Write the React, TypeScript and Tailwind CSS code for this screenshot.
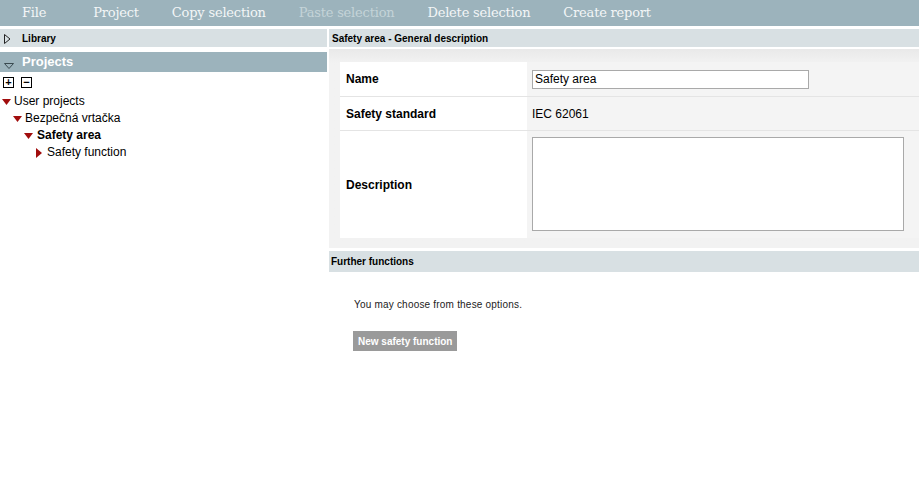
import { useState } from "react";

const menu = [
  { label: "File", disabled: false },
  { label: "Project", disabled: false },
  { label: "Copy selection", disabled: false },
  { label: "Paste selection", disabled: true },
  { label: "Delete selection", disabled: false },
  { label: "Create report", disabled: false },
];

function DownTri({ className = "" }: { className?: string }) {
  return (
    <svg width="9" height="6" viewBox="0 0 9 6" className={className}>
      <polygon points="0,0 9,0 4.5,6" fill="#a10d0d" />
    </svg>
  );
}

function RightTri() {
  return (
    <svg width="6" height="10" viewBox="0 0 6 10">
      <polygon points="0,0 6,5 0,10" fill="#a10d0d" />
    </svg>
  );
}

export default function App() {
  const [name, setName] = useState("Safety area");
  return (
    <div className="w-[919px] h-[499px] bg-white overflow-hidden font-['Liberation_Sans',Arial,sans-serif] text-black">
      {/* menu bar */}
      <div className="h-[26px] bg-[#9cb3bc] flex items-center pl-[22px] gap-[33px] font-['DejaVu_Serif',serif] text-[13px] tracking-[-0.2px]">
        {menu.map((m, i) => (
          <span
            key={m.label}
            className={(m.disabled ? "text-[#c4d3d8]" : "text-[#f3f6f7]") + (i === 0 ? " mr-[14px]" : "")}
          >
            {m.label}
          </span>
        ))}
      </div>

      <div className="flex mt-[3px]">
        {/* left */}
        <div className="w-[327px] shrink-0">
          <div className="h-[18px] bg-[#d8e0e3] flex items-center pl-[4px]">
            <svg width="7" height="10" viewBox="0 0 7 10" className="mt-[2px]">
              <polygon points="0.5,0.5 6,5 0.5,9.5" fill="none" stroke="#222" strokeWidth="1" />
            </svg>
            <span className="ml-[11px] text-[10px] font-bold">Library</span>
          </div>
          <div className="h-[20px] bg-[#9cb3bc] flex items-center pl-[4px] mt-[5px]">
            <svg width="10" height="6" viewBox="0 0 10 6" className="mt-[8px]">
              <polygon points="0.5,0.5 9.5,0.5 5,5.5" fill="none" stroke="#3a4a50" strokeWidth="1" />
            </svg>
            <span className="ml-[8px] text-[13px] font-bold text-white">Projects</span>
          </div>
          <div className="flex gap-[7px] pl-[3px] mt-[5px]">
            <div className="w-[11px] h-[11px] border border-black flex items-center justify-center text-[11px] leading-none font-bold">
              +
            </div>
            <div className="w-[11px] h-[11px] border border-black flex items-center justify-center text-[11px] leading-none font-bold">
              −
            </div>
          </div>
          <div className="text-[12px] mt-[5px] leading-[17px]">
            <div className="flex items-center gap-[3px] pl-[2px]">
              <DownTri />
              <span>User projects</span>
            </div>
            <div className="flex items-center gap-[3px] pl-[13px]">
              <DownTri />
              <span>Bezpečná vrtačka</span>
            </div>
            <div className="flex items-center gap-[4px] pl-[24px]">
              <DownTri />
              <span className="font-bold">Safety area</span>
            </div>
            <div className="flex items-center gap-[5px] pl-[36px]">
              <RightTri />
              <span>Safety function</span>
            </div>
          </div>
        </div>

        {/* right */}
        <div className="flex-1 ml-[2px]">
          <div className="h-[18px] bg-[#d8e0e3] flex items-center pl-[3px] text-[10px] font-bold">
            Safety area - General description
          </div>
          <div className="mt-[2px] bg-gradient-to-b from-[#e9e9e9] to-[#f2f2f2] to-[14px] pt-[13px] pl-[11px] pb-[10px]">
            <div className="text-[12px]">
              <div className="flex h-[35px] border-b border-[#e4e4e4]">
                <div className="w-[187px] bg-white flex items-center pl-[6px] font-bold">Name</div>
                <div className="flex-1 bg-[#f4f4f4] flex items-center pl-[5px]">
                  <input
                    value={name}
                    onChange={(e) => setName(e.target.value)}
                    className="w-[277px] h-[19px] border border-[#a9a9a9] bg-white px-[2px] text-[12px] outline-none"
                  />
                </div>
              </div>
              <div className="flex h-[34px] border-b border-[#e4e4e4]">
                <div className="w-[187px] bg-white flex items-center pl-[6px] font-bold">Safety standard</div>
                <div className="flex-1 bg-[#f4f4f4] flex items-center pl-[5px]">IEC 62061</div>
              </div>
              <div className="flex h-[107px]">
                <div className="w-[187px] bg-white flex items-center pl-[6px] font-bold">Description</div>
                <div className="flex-1 bg-[#f4f4f4] pl-[5px] pt-[6px]">
                  <textarea className="w-[372px] h-[94px] border border-[#a9a9a9] bg-white resize-none outline-none block" />
                </div>
              </div>
            </div>
          </div>
          <div className="h-[3px] bg-white" />
          <div className="h-[21px] bg-[#d8e0e3] flex items-center pl-[2px] text-[10px] font-bold">Further functions</div>
          <div className="pl-[25px] pt-[25px] text-[10px] tracking-[0.2px] text-[#222]">You may choose from these options.</div>
          <button className="ml-[24px] mt-[19px] h-[20px] px-[5px] bg-[#9a9a9a] text-white text-[10px] font-bold">
            New safety function
          </button>
        </div>
      </div>
    </div>
  );
}
